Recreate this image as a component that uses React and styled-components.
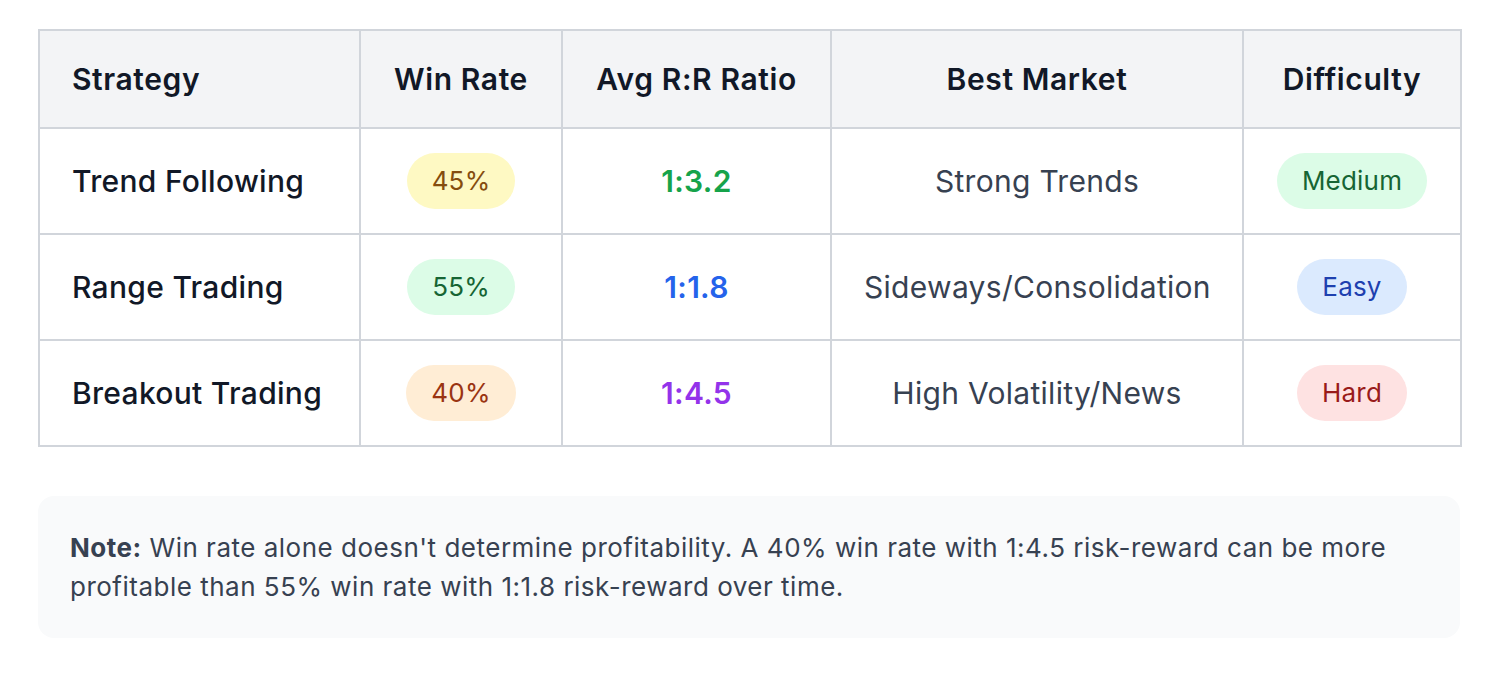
import React from "react";
import styled, { createGlobalStyle } from "styled-components";

const Global = createGlobalStyle`
  html, body { margin: 0; padding: 0; background: #ffffff; }
  body { font-family: Inter, "Noto Sans", "Liberation Sans", sans-serif; -webkit-font-smoothing: antialiased; }
`;

const Page = styled.div`
  padding: 29px 39px 40px 38px;
  display: flex;
  flex-direction: column;
  gap: 49px;
`;

const Table = styled.table`
  width: 100%;
  border-collapse: collapse;
  table-layout: fixed;
  border: 2px solid #d1d5db;
`;

const Col = styled.col`
  width: ${(p) => p.$w}px;
`;

const Th = styled.th`
  background: #f3f4f6;
  border: 2px solid #d1d5db;
  padding: 30px 32px;
  font-size: 30px;
  line-height: 36px;
  font-weight: 600;
  letter-spacing: 0.6px;
  color: #111827;
  text-align: ${(p) => (p.$left ? "left" : "center")};
`;

const Td = styled.td`
  border: 2px solid #d1d5db;
  padding: 24px 32px;
  height: 56px;
  font-size: 30px;
  line-height: 36px;
  letter-spacing: 0.3px;
  vertical-align: middle;
  text-align: ${(p) => (p.$left ? "left" : "center")};
  color: ${(p) => p.$color || "#374151"};
  font-weight: ${(p) => p.$weight || 400};
`;

const Badge = styled.span`
  display: inline-block;
  padding: 12px 25px;
  border-radius: 28px;
  font-size: 26px;
  line-height: 32px;
  letter-spacing: 0.2px;
  font-weight: 400;
  background: ${(p) => p.$bg};
  color: ${(p) => p.$fg};
`;

const Note = styled.div`
  background: #f9fafb;
  border-radius: 16px;
  padding: 32px 32px;
  font-size: 26px;
  line-height: 39px;
  letter-spacing: 0.5px;
  color: #374151;
`;

const Strong = styled.strong`
  font-weight: 700;
`;

const tones = {
  yellow: { bg: "#fef9c3", fg: "#854d0e" },
  green: { bg: "#dcfce7", fg: "#166534" },
  orange: { bg: "#ffedd5", fg: "#9a3412" },
  blue: { bg: "#dbeafe", fg: "#1e40af" },
  red: { bg: "#fee2e2", fg: "#991b1b" },
};

const rows = [
  { name: "Trend Following", win: "45%", winTone: "yellow", rr: "1:3.2", rrColor: "#16a34a", market: "Strong Trends", diff: "Medium", diffTone: "green" },
  { name: "Range Trading", win: "55%", winTone: "green", rr: "1:1.8", rrColor: "#2563eb", market: "Sideways/Consolidation", diff: "Easy", diffTone: "blue" },
  { name: "Breakout Trading", win: "40%", winTone: "orange", rr: "1:4.5", rrColor: "#9333ea", market: "High Volatility/News", diff: "Hard", diffTone: "red" },
];

export default function App() {
  return (
    <>
      <Global />
      <Page>
        <Table>
          <colgroup>
            <Col $w={321} />
            <Col $w={202} />
            <Col $w={269} />
            <Col $w={412} />
            <Col $w={218} />
          </colgroup>
          <thead>
            <tr>
              <Th $left>Strategy</Th>
              <Th>Win Rate</Th>
              <Th>Avg R:R Ratio</Th>
              <Th>Best Market</Th>
              <Th>Difficulty</Th>
            </tr>
          </thead>
          <tbody>
            {rows.map((r) => (
              <tr key={r.name}>
                <Td $left $color="#111827" $weight={500}>{r.name}</Td>
                <Td>
                  <Badge $bg={tones[r.winTone].bg} $fg={tones[r.winTone].fg}>{r.win}</Badge>
                </Td>
                <Td $color={r.rrColor} $weight={600}>{r.rr}</Td>
                <Td>{r.market}</Td>
                <Td>
                  <Badge $bg={tones[r.diffTone].bg} $fg={tones[r.diffTone].fg}>{r.diff}</Badge>
                </Td>
              </tr>
            ))}
          </tbody>
        </Table>
        <Note>
          <Strong>Note:</Strong> Win rate alone doesn't determine profitability. A 40% win rate with 1:4.5 risk-reward can be more profitable than 55% win rate with 1:1.8 risk-reward over time.
        </Note>
      </Page>
    </>
  );
}
